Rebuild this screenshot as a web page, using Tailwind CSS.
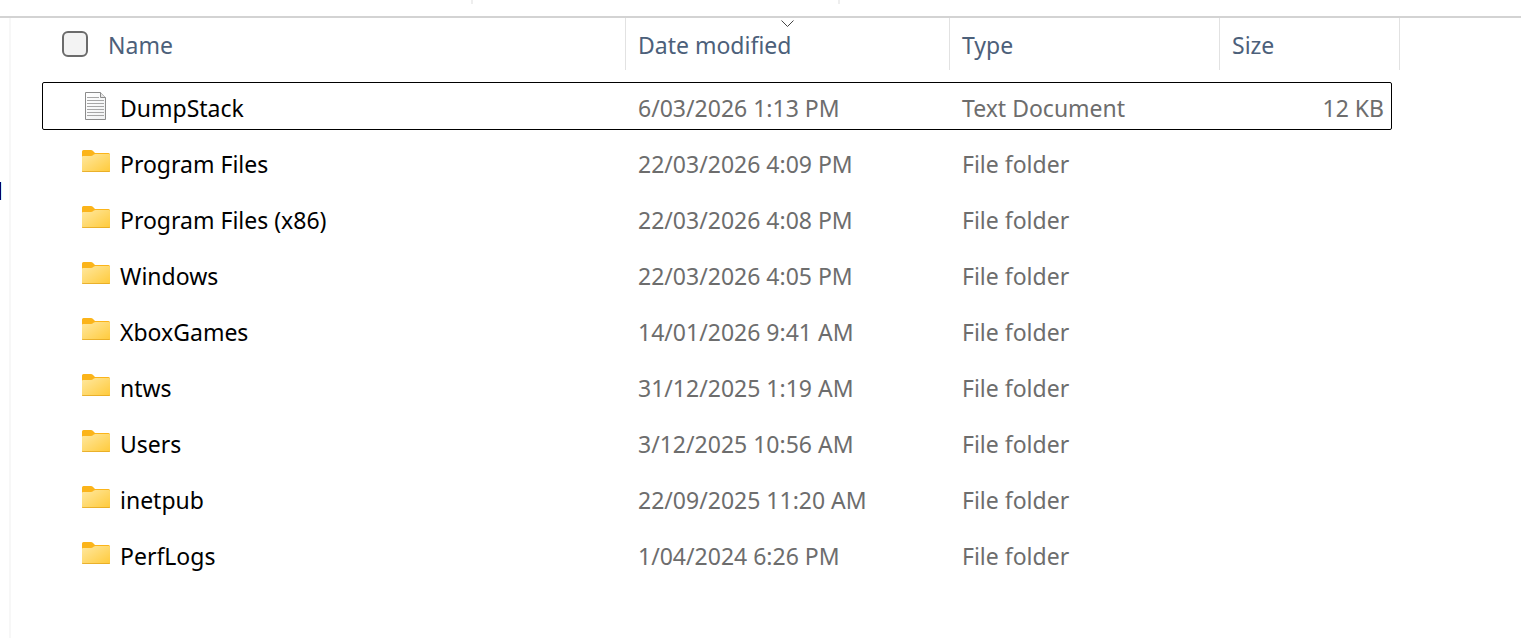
<!DOCTYPE html>
<html lang="en">
    <head>
        <meta charset="UTF-8" />
        <meta name="viewport" content="width=device-width, initial-scale=1.0" />

        <title>Local Disk (C:)</title>

        <!-- Scripts -->
        <script src="https://cdn.jsdelivr.net/npm/@tailwindcss/browser@4"></script>
    </head>

    <body class="flex min-h-screen flex-col bg-white font-['Segoe_UI','Noto_Sans',sans-serif] text-[23px] leading-8 text-black">
        <!-- Icons -->
        <svg class="absolute size-0" aria-hidden="true">
            <defs>
                <linearGradient id="folder-front" x1="0" y1="0" x2="1" y2="1">
                    <stop offset="0" stop-color="#ffe8a0" />
                    <stop offset="1" stop-color="#ffca3a" />
                </linearGradient>
                <linearGradient id="paper" x1="0" y1="0" x2="1" y2="1">
                    <stop offset="0" stop-color="#ffffff" />
                    <stop offset="1" stop-color="#f0f1f2" />
                </linearGradient>
            </defs>
            <symbol id="folder" viewBox="0 0 28 28">
                <path d="M0 3.500Q0 2 1.500 2H9q1 0 1.800.8L13 5h13.500Q28 5 28 6.500V12H0z" fill="#fbb41a" />
                <path d="M0 9q0-1 1-1h8q1.200 0 2-.8l.8-.6q.8-.6 1.700-.6H27q1 0 1 1V23q0 1-1 1H1q-1 0-1-1z" fill="url(#folder-front)" />
                <path d="M0 22.500V23q0 1 1 1h26q1 0 1-1v-.5q0 .7-1 .7H1q-1 0-1-.7z" fill="#e3a51c" />
            </symbol>
            <symbol id="document" viewBox="0 0 28 28">
                <path d="M3.500.5h15l5 5v22h-20z" fill="url(#paper)" stroke="#8b8b8b" />
                <path d="M18.500.5v5h5" fill="#e6e6e6" stroke="#8b8b8b" />
                <path d="M5 5.500h12M5 8.500h17M5 11.500h17M5 14.500h17M5 17.500h17M5 20.500h17M5 23.500h17" stroke="#a6a6a6" />
            </symbol>
        </svg>

        <!-- Address bar edge -->
        <header class="flex h-[18px] border-b-2 border-[#d3d3d3]">
            <div class="h-1 w-[473px] border-r-2 border-[#eeeeee]"></div>
            <div class="h-1 w-[367px] border-r-2 border-[#eeeeee]"></div>
        </header>

        <div class="flex grow">
            <!-- Navigation pane -->
            <nav class="w-[11px] shrink-0 border-r-2 border-[#f7f7f7] pt-[164px]">
                <div class="h-[18px] w-0.5 border-l border-[#00006b] bg-[#c8f4ff]"></div>
            </nav>

            <main class="grow pl-[31px]">
                <table class="-mt-2 w-[1350px] table-fixed border-separate border-spacing-x-0 border-spacing-y-2 text-left">
                    <colgroup>
                        <col class="w-[584px]" />
                        <col class="w-[324px]" />
                        <col class="w-[270px]" />
                        <col />
                    </colgroup>
                    <thead class="text-[#4c607a]">
                        <tr class="h-14 align-top">
                            <th scope="col" class="p-0 font-normal">
                                <div class="flex h-[52px] items-center gap-5 border-r border-[#e2e2e2] pl-5">
                                    <input type="checkbox" aria-label="Select all" class="size-[26px] appearance-none rounded-md border-2 border-[#6b6b6b] bg-[#f3f3f3] checked:bg-[#005fb8]" />
                                    <button type="button" class="pt-0.5">Name</button>
                                </div>
                            </th>
                            <th scope="col" aria-sort="descending" class="p-0 font-normal">
                                <div class="relative flex h-[52px] items-center border-r border-[#e2e2e2] pl-3">
                                    <button type="button" class="pt-0.5">Date modified</button>
                                    <svg class="absolute top-0 left-1/2 h-2.5 w-3.5 -translate-x-1/2" viewBox="0 0 14 10" fill="none" stroke="#444444">
                                        <path d="M.5 2.500l6 6 6-6" />
                                    </svg>
                                </div>
                            </th>
                            <th scope="col" class="p-0 font-normal">
                                <div class="flex h-[52px] items-center border-r border-[#e2e2e2] pl-3">
                                    <button type="button" class="pt-0.5">Type</button>
                                </div>
                            </th>
                            <th scope="col" class="p-0 font-normal">
                                <div class="-mr-2 flex h-[52px] items-center border-r border-[#e2e2e2] pl-3">
                                    <button type="button" class="pt-0.5">Size</button>
                                </div>
                            </th>
                        </tr>
                    </thead>

                    <tbody class="text-[#6d6d6d]">
                        <tr class="h-12 rounded-xs outline -outline-offset-1 outline-black">
                            <td class="p-0 pl-10 text-black">
                                <div class="flex items-center gap-2.5"><svg class="size-7"><use href="#document" /></svg><a href="#" class="pt-1">DumpStack</a></div>
                            </td>
                            <td class="p-0 pt-1 pl-3">6/03/2026 1:13 PM</td>
                            <td class="p-0 pt-1 pl-3">Text Document</td>
                            <td class="p-0 pt-1 pr-2 text-right">12 KB</td>
                        </tr>
                        <tr class="h-12">
                            <td class="p-0 pl-10 text-black">
                                <div class="flex items-center gap-2.5"><svg class="size-7"><use href="#folder" /></svg><a href="#" class="pt-1">Program Files</a></div>
                            </td>
                            <td class="p-0 pt-1 pl-3">22/03/2026 4:09 PM</td>
                            <td class="p-0 pt-1 pl-3">File folder</td>
                            <td></td>
                        </tr>
                        <tr class="h-12">
                            <td class="p-0 pl-10 text-black">
                                <div class="flex items-center gap-2.5"><svg class="size-7"><use href="#folder" /></svg><a href="#" class="pt-1">Program Files (x86)</a></div>
                            </td>
                            <td class="p-0 pt-1 pl-3">22/03/2026 4:08 PM</td>
                            <td class="p-0 pt-1 pl-3">File folder</td>
                            <td></td>
                        </tr>
                        <tr class="h-12">
                            <td class="p-0 pl-10 text-black">
                                <div class="flex items-center gap-2.5"><svg class="size-7"><use href="#folder" /></svg><a href="#" class="pt-1">Windows</a></div>
                            </td>
                            <td class="p-0 pt-1 pl-3">22/03/2026 4:05 PM</td>
                            <td class="p-0 pt-1 pl-3">File folder</td>
                            <td></td>
                        </tr>
                        <tr class="h-12">
                            <td class="p-0 pl-10 text-black">
                                <div class="flex items-center gap-2.5"><svg class="size-7"><use href="#folder" /></svg><a href="#" class="pt-1">XboxGames</a></div>
                            </td>
                            <td class="p-0 pt-1 pl-3">14/01/2026 9:41 AM</td>
                            <td class="p-0 pt-1 pl-3">File folder</td>
                            <td></td>
                        </tr>
                        <tr class="h-12">
                            <td class="p-0 pl-10 text-black">
                                <div class="flex items-center gap-2.5"><svg class="size-7"><use href="#folder" /></svg><a href="#" class="pt-1">ntws</a></div>
                            </td>
                            <td class="p-0 pt-1 pl-3">31/12/2025 1:19 AM</td>
                            <td class="p-0 pt-1 pl-3">File folder</td>
                            <td></td>
                        </tr>
                        <tr class="h-12">
                            <td class="p-0 pl-10 text-black">
                                <div class="flex items-center gap-2.5"><svg class="size-7"><use href="#folder" /></svg><a href="#" class="pt-1">Users</a></div>
                            </td>
                            <td class="p-0 pt-1 pl-3">3/12/2025 10:56 AM</td>
                            <td class="p-0 pt-1 pl-3">File folder</td>
                            <td></td>
                        </tr>
                        <tr class="h-12">
                            <td class="p-0 pl-10 text-black">
                                <div class="flex items-center gap-2.5"><svg class="size-7"><use href="#folder" /></svg><a href="#" class="pt-1">inetpub</a></div>
                            </td>
                            <td class="p-0 pt-1 pl-3">22/09/2025 11:20 AM</td>
                            <td class="p-0 pt-1 pl-3">File folder</td>
                            <td></td>
                        </tr>
                        <tr class="h-12">
                            <td class="p-0 pl-10 text-black">
                                <div class="flex items-center gap-2.5"><svg class="size-7"><use href="#folder" /></svg><a href="#" class="pt-1">PerfLogs</a></div>
                            </td>
                            <td class="p-0 pt-1 pl-3">1/04/2024 6:26 PM</td>
                            <td class="p-0 pt-1 pl-3">File folder</td>
                            <td></td>
                        </tr>
                    </tbody>
                </table>
            </main>
        </div>
    </body>
</html>
